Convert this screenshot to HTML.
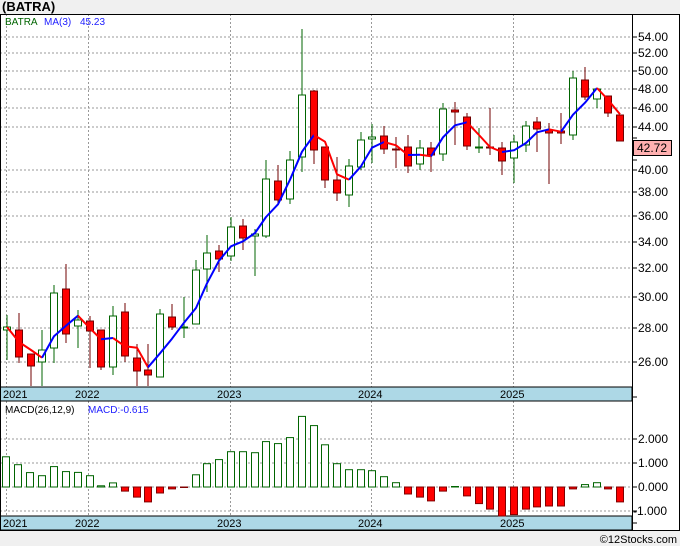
<!DOCTYPE html>
<html><head><meta charset="utf-8"><style>
html,body{margin:0;padding:0;background:#f0f0f0;}
svg{display:block;font-family:"Liberation Sans",sans-serif;}
</style></head><body>
<svg width="680" height="546" viewBox="0 0 680 546" xmlns="http://www.w3.org/2000/svg">
<rect x="0" y="0" width="680" height="546" fill="#f0f0f0"/>
<text x="2" y="11" font-size="13" font-weight="bold" fill="#000">(BATRA)</text>
<rect x="0" y="14" width="680" height="517" fill="#fff"/>
<!-- grid price -->
<g stroke="#999" stroke-width="1" stroke-dasharray="2,2">
<line x1="0" x2="632" y1="37" y2="37"/><line x1="0" x2="632" y1="53" y2="53"/><line x1="0" x2="632" y1="71" y2="71"/><line x1="0" x2="632" y1="89" y2="89"/><line x1="0" x2="632" y1="108" y2="108"/><line x1="0" x2="632" y1="127" y2="127"/><line x1="0" x2="632" y1="170" y2="170"/><line x1="0" x2="632" y1="192" y2="192"/><line x1="0" x2="632" y1="216" y2="216"/><line x1="0" x2="632" y1="242" y2="242"/><line x1="0" x2="632" y1="268" y2="268"/><line x1="0" x2="632" y1="297" y2="297"/><line x1="0" x2="632" y1="328" y2="328"/><line x1="0" x2="632" y1="362" y2="362"/>
<line x1="6.5" x2="6.5" y1="14" y2="387"/><line x1="88.5" x2="88.5" y1="14" y2="387"/><line x1="230.5" x2="230.5" y1="14" y2="387"/><line x1="371.5" x2="371.5" y1="14" y2="387"/><line x1="513.5" x2="513.5" y1="14" y2="387"/>
<line x1="0" x2="632" y1="439" y2="439"/><line x1="0" x2="632" y1="463" y2="463"/><line x1="0" x2="632" y1="487" y2="487"/><line x1="0" x2="632" y1="511" y2="511"/>
<line x1="6.5" x2="6.5" y1="401" y2="516"/><line x1="88.5" x2="88.5" y1="401" y2="516"/><line x1="230.5" x2="230.5" y1="401" y2="516"/><line x1="371.5" x2="371.5" y1="401" y2="516"/><line x1="513.5" x2="513.5" y1="401" y2="516"/>
</g>
<text x="5" y="25" font-size="10" fill="#006400">BATRA</text>
<text x="44" y="25" font-size="10" fill="#2020ff">MA(3)</text>
<text x="80" y="25" font-size="10" fill="#2020ff">45.23</text>
<!-- candles -->
<g stroke-width="1">
<g stroke="#006400" fill="#fff">
<line x1="7" x2="7" y1="315" y2="360"/><rect x="3.5" y="327" width="7" height="3"/>
<line x1="42" x2="42" y1="330" y2="386"/><rect x="38.5" y="350" width="7" height="12"/>
<line x1="54" x2="54" y1="285" y2="363"/><rect x="50.5" y="293" width="7" height="55"/>
<line x1="78" x2="78" y1="310" y2="348"/><rect x="74.5" y="320" width="7" height="6"/>
<line x1="113" x2="113" y1="306" y2="375"/><rect x="109.5" y="316" width="7" height="51"/>
<line x1="160" x2="160" y1="309" y2="377"/><rect x="156.5" y="314" width="7" height="63"/>
<line x1="184" x2="184" y1="297" y2="338"/><rect x="180.5" y="327" width="7" height="1"/>
<line x1="196" x2="196" y1="260" y2="324"/><rect x="192.5" y="270" width="7" height="54"/>
<line x1="207" x2="207" y1="235" y2="292"/><rect x="203.5" y="253" width="7" height="16"/>
<line x1="231" x2="231" y1="217" y2="261"/><rect x="227.5" y="227" width="7" height="29"/>
<line x1="255" x2="255" y1="229" y2="276"/><rect x="251.5" y="234" width="7" height="2"/>
<line x1="266" x2="266" y1="160" y2="238"/><rect x="262.5" y="179" width="7" height="57"/>
<line x1="290" x2="290" y1="151" y2="204"/><rect x="286.5" y="160" width="7" height="39"/>
<line x1="302" x2="302" y1="29" y2="172"/><rect x="298.5" y="95" width="7" height="62"/>
<line x1="349" x2="349" y1="159" y2="207"/><rect x="345.5" y="166" width="7" height="29"/>
<line x1="361" x2="361" y1="132" y2="170"/><rect x="357.5" y="140" width="7" height="27"/>
<line x1="372" x2="372" y1="124" y2="163"/><rect x="368.5" y="137" width="7" height="2"/>
<line x1="420" x2="420" y1="140" y2="170"/><rect x="416.5" y="148" width="7" height="16"/>
<line x1="443" x2="443" y1="103" y2="161"/><rect x="439.5" y="109" width="7" height="45"/>
<line x1="479" x2="479" y1="128" y2="153"/><rect x="475.5" y="147" width="7" height="1"/>
<line x1="514" x2="514" y1="135" y2="183"/><rect x="510.5" y="142" width="7" height="16"/>
<line x1="526" x2="526" y1="121" y2="152"/><rect x="522.5" y="126" width="7" height="19"/>
<line x1="573" x2="573" y1="71" y2="140"/><rect x="569.5" y="78" width="7" height="57"/>
<line x1="597" x2="597" y1="88" y2="108"/><rect x="593.5" y="89" width="7" height="10"/>
</g>
<g stroke="#700000" fill="#f00">
<line x1="19" x2="19" y1="313" y2="363"/><rect x="15.5" y="330" width="7" height="27"/>
<line x1="31" x2="31" y1="354" y2="386"/><rect x="27.5" y="354" width="7" height="12"/>
<line x1="66" x2="66" y1="264" y2="343"/><rect x="62.5" y="289" width="7" height="45"/>
<line x1="90" x2="90" y1="316" y2="368"/><rect x="86.5" y="321" width="7" height="10"/>
<line x1="101" x2="101" y1="330" y2="370"/><rect x="97.5" y="330" width="7" height="37"/>
<line x1="125" x2="125" y1="303" y2="362"/><rect x="121.5" y="312" width="7" height="44"/>
<line x1="137" x2="137" y1="344" y2="386"/><rect x="133.5" y="358" width="7" height="13"/>
<line x1="148" x2="148" y1="344" y2="386"/><rect x="144.5" y="370" width="7" height="5"/>
<line x1="172" x2="172" y1="304" y2="330"/><rect x="168.5" y="317" width="7" height="10"/>
<line x1="219" x2="219" y1="245" y2="272"/><rect x="215.5" y="251" width="7" height="8"/>
<line x1="243" x2="243" y1="219" y2="250"/><rect x="239.5" y="226" width="7" height="12"/>
<line x1="278" x2="278" y1="165" y2="204"/><rect x="274.5" y="181" width="7" height="19"/>
<line x1="314" x2="314" y1="90" y2="164"/><rect x="310.5" y="91" width="7" height="59"/>
<line x1="325" x2="325" y1="147" y2="188"/><rect x="321.5" y="147" width="7" height="33"/>
<line x1="337" x2="337" y1="157" y2="201"/><rect x="333.5" y="180" width="7" height="13"/>
<line x1="384" x2="384" y1="126" y2="154"/><rect x="380.5" y="136" width="7" height="13"/>
<line x1="396" x2="396" y1="137" y2="168"/><rect x="392.5" y="149" width="7" height="1"/>
<line x1="408" x2="408" y1="135" y2="173"/><rect x="404.5" y="147" width="7" height="19"/>
<line x1="431" x2="431" y1="142" y2="172"/><rect x="427.5" y="148" width="7" height="7"/>
<line x1="455" x2="455" y1="102" y2="145"/><rect x="451.5" y="110" width="7" height="2"/>
<line x1="467" x2="467" y1="113" y2="150"/><rect x="463.5" y="117" width="7" height="29"/>
<line x1="490" x2="490" y1="108" y2="155"/><rect x="486.5" y="147" width="7" height="1"/>
<line x1="502" x2="502" y1="142" y2="175"/><rect x="498.5" y="148" width="7" height="13"/>
<line x1="537" x2="537" y1="117" y2="152"/><rect x="533.5" y="122" width="7" height="7"/>
<line x1="549" x2="549" y1="123" y2="184"/><rect x="545.5" y="130" width="7" height="3"/>
<line x1="561" x2="561" y1="113" y2="144"/><rect x="557.5" y="131" width="7" height="2"/>
<line x1="585" x2="585" y1="67" y2="100"/><rect x="581.5" y="80" width="7" height="17"/>
<line x1="608" x2="608" y1="96" y2="117"/><rect x="604.5" y="96" width="7" height="17"/>
<line x1="620" x2="620" y1="115" y2="141"/><rect x="616.5" y="115" width="7" height="26"/>
</g>
</g>
<!-- MA -->
<g fill="none" stroke-width="2" stroke-linejoin="round">
<polyline stroke="#f00" points="7,327 19,342 31,350 42,357.7"/>
<polyline stroke="#00f" points="42,357.7 54,336.3 66,325.7 78,315.7"/>
<polyline stroke="#f00" points="78,315.7 90,328.3 101,339.3"/>
<polyline stroke="#00f" points="101,339.3 113,338"/>
<polyline stroke="#f00" points="113,338 125,346.3 137,347.7 148,367.3"/>
<polyline stroke="#00f" points="148,367.3 160,353.3 172,338.7 184,322.7 196,308 207,283.3 219,260.7 231,246.3 243,241.3 255,233 266,217 278,204.3 290,179.7 302,151.7 314,135"/>
<polyline stroke="#f00" points="314,135 325,141.7 337,174.3 349,179.7"/>
<polyline stroke="#00f" points="349,179.7 361,166.3 372,147.7 384,142"/>
<polyline stroke="#f00" points="384,142 396,145.3 408,155"/>
<polyline stroke="#00f" points="408,155 420,154.7"/>
<polyline stroke="#f00" points="420,154.7 431,156.3"/>
<polyline stroke="#00f" points="431,156.3 443,137.3 455,125.3 467,122.3"/>
<polyline stroke="#f00" points="467,122.3 479,135 490,147 502,152"/>
<polyline stroke="#00f" points="502,152 514,150.3 526,143 537,132.3 549,129.3"/>
<polyline stroke="#f00" points="549,129.3 561,131.7"/>
<polyline stroke="#00f" points="561,131.7 573,114.7 585,102.7 597,88"/>
<polyline stroke="#f00" points="597,88 608,99.7 620,114.3"/>
</g>
<!-- date strips -->
<rect x="0" y="387" width="632" height="14" fill="#add8e6" stroke="#000"/>
<rect x="0" y="516" width="632" height="14" fill="#add8e6" stroke="#000"/>
<g font-size="11" fill="#000">
<text x="3" y="398">2021</text><text x="75" y="398">2022</text><text x="217" y="398">2023</text><text x="358" y="398">2024</text><text x="500" y="398">2025</text>
<text x="3" y="527">2021</text><text x="75" y="527">2022</text><text x="217" y="527">2023</text><text x="358" y="527">2024</text><text x="500" y="527">2025</text>
</g>
<!-- MACD -->
<text x="5" y="413" font-size="10" fill="#000">MACD(26,12,9)</text>
<text x="88" y="413" font-size="10" fill="#2020ff">MACD:-0.615</text>
<g stroke="#006400" fill="#fff">
<rect x="2.5" y="456.8" width="7" height="30.2"/><rect x="14.5" y="464.7" width="7" height="22.3"/><rect x="26.5" y="472.6" width="7" height="14.4"/><rect x="38.5" y="475.7" width="7" height="11.3"/><rect x="50.5" y="466.6" width="7" height="20.4"/><rect x="62.5" y="471.6" width="7" height="15.4"/><rect x="74.5" y="472.4" width="7" height="14.6"/><rect x="86.5" y="475.7" width="7" height="11.3"/><rect x="97.5" y="485.8" width="7" height="1.2"/><rect x="109.5" y="482.9" width="7" height="4.1"/>
<rect x="192.5" y="474.8" width="7" height="12.2"/><rect x="203.5" y="463.7" width="7" height="23.3"/><rect x="215.5" y="459.6" width="7" height="27.4"/><rect x="227.5" y="451.7" width="7" height="35.3"/><rect x="239.5" y="451.7" width="7" height="35.3"/><rect x="251.5" y="452.7" width="7" height="34.3"/><rect x="262.5" y="441.6" width="7" height="45.4"/><rect x="274.5" y="443.6" width="7" height="43.4"/><rect x="286.5" y="437.6" width="7" height="49.4"/><rect x="298.5" y="416.4" width="7" height="70.6"/><rect x="310.5" y="425.6" width="7" height="61.4"/><rect x="321.5" y="444.8" width="7" height="42.2"/><rect x="333.5" y="463.7" width="7" height="23.3"/><rect x="345.5" y="469.7" width="7" height="17.3"/><rect x="357.5" y="469.7" width="7" height="17.3"/><rect x="368.5" y="470.7" width="7" height="16.3"/><rect x="380.5" y="476.7" width="7" height="10.3"/><rect x="392.5" y="482.7" width="7" height="4.3"/>
<rect x="451.5" y="486.5" width="7" height="0.5"/>
<rect x="581.5" y="484.6" width="7" height="2.4"/><rect x="593.5" y="482.7" width="7" height="4.3"/>
</g>
<g stroke="#800000" fill="#f00">
<rect x="121.5" y="487" width="7" height="4.1"/><rect x="133.5" y="487" width="7" height="10.1"/><rect x="144.5" y="487" width="7" height="14.9"/><rect x="156.5" y="487" width="7" height="6"/><rect x="168.5" y="487" width="7" height="1.9"/><rect x="180.5" y="487" width="7" height="0.5"/>
<rect x="404.5" y="487" width="7" height="7"/><rect x="416.5" y="487" width="7" height="10.1"/><rect x="427.5" y="487" width="7" height="13.9"/><rect x="439.5" y="487" width="7" height="4.1"/>
<rect x="463.5" y="487" width="7" height="8.9"/><rect x="475.5" y="487" width="7" height="16.6"/><rect x="486.5" y="487" width="7" height="22.1"/><rect x="498.5" y="487" width="7" height="29"/><rect x="510.5" y="487" width="7" height="27.6"/><rect x="522.5" y="487" width="7" height="22.1"/><rect x="533.5" y="487" width="7" height="19.9"/><rect x="545.5" y="487" width="7" height="19"/><rect x="557.5" y="487" width="7" height="19"/><rect x="569.5" y="487" width="7" height="1.9"/>
<rect x="604.5" y="487" width="7" height="1.9"/><rect x="616.5" y="487" width="7" height="14.9"/>
</g>
<!-- axes -->
<line x1="632.5" y1="14" x2="632.5" y2="531" stroke="#000"/>
<rect x="0.5" y="14.5" width="679" height="516" fill="none" stroke="#000"/>
<g stroke="#000">
<line x1="632" x2="637" y1="37" y2="37"/><line x1="632" x2="637" y1="53" y2="53"/><line x1="632" x2="637" y1="71" y2="71"/><line x1="632" x2="637" y1="89" y2="89"/><line x1="632" x2="637" y1="108" y2="108"/><line x1="632" x2="637" y1="127" y2="127"/><line x1="632" x2="637" y1="138" y2="138"/><line x1="632" x2="637" y1="160" y2="160"/><line x1="632" x2="637" y1="170" y2="170"/><line x1="632" x2="637" y1="192" y2="192"/><line x1="632" x2="637" y1="216" y2="216"/><line x1="632" x2="637" y1="242" y2="242"/><line x1="632" x2="637" y1="268" y2="268"/><line x1="632" x2="637" y1="297" y2="297"/><line x1="632" x2="637" y1="328" y2="328"/><line x1="632" x2="637" y1="362" y2="362"/><line x1="632" x2="637" y1="397" y2="397"/>
<line x1="632" x2="637" y1="439" y2="439"/><line x1="632" x2="637" y1="463" y2="463"/><line x1="632" x2="637" y1="487" y2="487"/><line x1="632" x2="637" y1="511" y2="511"/><line x1="632" x2="637" y1="523" y2="523"/>
</g>
<g font-size="12" fill="#000">
<text x="638" y="41">54.00</text><text x="638" y="57">52.00</text><text x="638" y="75">50.00</text><text x="638" y="93">48.00</text><text x="638" y="112">46.00</text><text x="638" y="131">44.00</text><text x="638" y="174">40.00</text><text x="638" y="196">38.00</text><text x="638" y="220">36.00</text><text x="638" y="246">34.00</text><text x="638" y="272">32.00</text><text x="638" y="301">30.00</text><text x="638" y="332">28.00</text><text x="638" y="366">26.00</text>
<text x="638" y="443">2.000</text><text x="638" y="467">1.000</text><text x="638" y="491">0.000</text><text x="633" y="515">-1.000</text>
</g>
<rect x="633.5" y="140.5" width="38" height="15" fill="#ffb0b0" stroke="#000"/>
<text x="637" y="152" font-size="12" fill="#000">42.72</text>
<rect x="0" y="531" width="680" height="15" fill="#f0f0f0"/>
<text x="677" y="543" font-size="11" fill="#000" text-anchor="end">©12Stocks.com</text>
</svg>
</body></html>
